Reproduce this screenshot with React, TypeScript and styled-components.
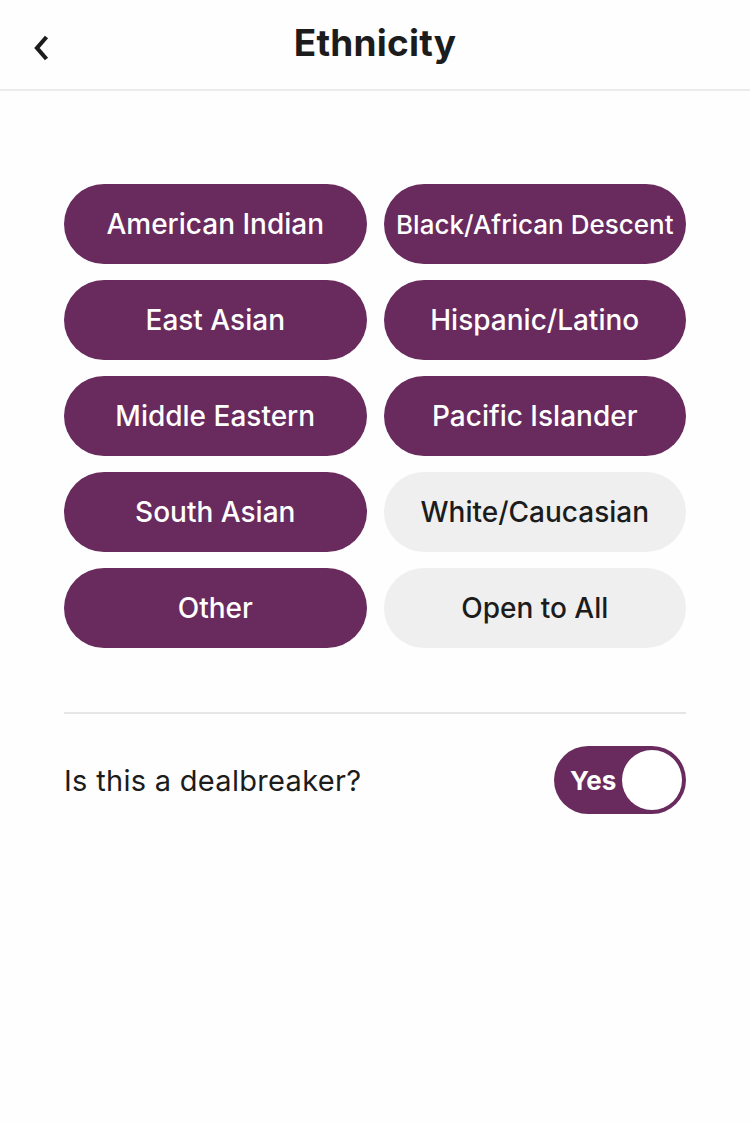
import React, { FC, useState } from 'react'
import styled, { createGlobalStyle } from 'styled-components'

const GlobalStyle = createGlobalStyle`
  body {
    margin: 0;
    background: #fefefe;
    font-family: Inter, 'Noto Sans', sans-serif;
    color: #1d1d1d;
  }
`

const Header = styled.header`
  position: relative;
  height: 89px;
  display: flex;
  align-items: center;
  justify-content: center;
  border-bottom: 2px solid #ececec;
`
const BackButton = styled.button`
  position: absolute;
  left: 28px;
  top: 32px;
  width: 26px;
  height: 32px;
  padding: 0;
  border: none;
  background: none;
  display: flex;
  align-items: center;
  justify-content: center;
`
const Title = styled.h1`
  margin: 0;
  font-size: 37px;
  font-weight: 700;
  letter-spacing: 0.2px;
  color: #1c1c1c;
  margin-top: -4px;
`

const Content = styled.main`
  padding: 93px 64px 0;
`
const ChipGrid = styled.div`
  display: grid;
  grid-template-columns: 1fr 1fr;
  column-gap: 17px;
  row-gap: 16px;
`
const Chip = styled.button<{ $selected: boolean; $small?: boolean }>`
  height: 80px;
  border: none;
  border-radius: 40px;
  padding: 0 6px;
  font-family: inherit;
  font-size: ${(p) => (p.$small ? '26px' : '28px')};
  font-weight: 500;
  white-space: nowrap;
  background: ${(p) => (p.$selected ? '#692a5e' : '#efefef')};
  color: ${(p) => (p.$selected ? '#ffffff' : '#1c1c1c')};
`
const Divider = styled.hr`
  margin: 64px 0 0;
  border: none;
  border-top: 2px solid #e6e6e6;
`
const DealRow = styled.div`
  margin-top: 32px;
  display: flex;
  align-items: center;
  justify-content: space-between;
`
const DealLabel = styled.span`
  font-size: 29px;
  font-weight: 400;
  letter-spacing: 0.3px;
  color: #1c1c1c;
`
const Toggle = styled.div`
  width: 132px;
  height: 68px;
  border-radius: 34px;
  background: #692a5e;
  box-sizing: border-box;
  padding: 4px;
  display: flex;
  align-items: center;
  justify-content: space-between;
`
const ToggleText = styled.span`
  color: #fff;
  font-size: 26px;
  font-weight: 700;
  padding-left: 12px;
`
const Knob = styled.span`
  width: 60px;
  height: 60px;
  border-radius: 50%;
  background: #fff;
`

const options = [
  'American Indian',
  'Black/African Descent',
  'East Asian',
  'Hispanic/Latino',
  'Middle Eastern',
  'Pacific Islander',
  'South Asian',
  'White/Caucasian',
  'Other',
  'Open to All',
]

const App: FC = () => {
  const [selected, setSelected] = useState<string[]>(
    options.filter((o) => o !== 'White/Caucasian' && o !== 'Open to All')
  )

  const toggle = (o: string) => {
    setSelected((s) => (s.includes(o) ? s.filter((x) => x !== o) : [...s, o]))
  }

  return (
    <>
      <GlobalStyle />
      <Header>
        <BackButton aria-label="Back">
          <svg width="22" height="30" viewBox="0 0 22 30" fill="none">
            <path d="M16.5 4 L7 15 L16.5 26" stroke="#1c1c1c" strokeWidth="4.2" />
          </svg>
        </BackButton>
        <Title>Ethnicity</Title>
      </Header>
      <Content>
        <ChipGrid>
          {options.map((o) => (
            <Chip
              key={o}
              $selected={selected.includes(o)}
              $small={o.length > 18}
              onClick={() => toggle(o)}
            >
              {o}
            </Chip>
          ))}
        </ChipGrid>
        <Divider />
        <DealRow>
          <DealLabel>Is this a dealbreaker?</DealLabel>
          <Toggle>
            <ToggleText>Yes</ToggleText>
            <Knob />
          </Toggle>
        </DealRow>
      </Content>
    </>
  )
}

export default App
